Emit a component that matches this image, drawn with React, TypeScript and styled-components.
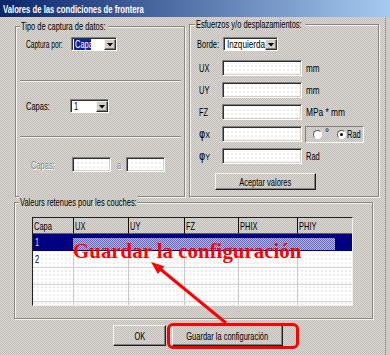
import React from "react";
import styled, { createGlobalStyle } from "styled-components";

const dither = `repeating-conic-gradient(#dbd7d2 0 25%, #c1bdb8 0 50%) 0 0 / 2px 2px`;
const fieldDots = `radial-gradient(circle at 1px 1px, #dadada 0.6px, transparent 0.8px) 0 0 / 4px 4px, #ffffff`;

const GlobalStyle = createGlobalStyle`
  html, body { margin: 0; padding: 0; width: 390px; height: 355px; overflow: hidden; background: ${dither}; }
  * { box-sizing: border-box; }
  body { font-family: "Liberation Sans", Arial, sans-serif; font-size: 11px; color: #000; }
`;

const Window = styled.div`
  position: relative;
  width: 390px;
  height: 355px;
  display: flex;
  flex-direction: column;
  background: ${dither};
`;

const TitleBar = styled.div`
  height: 17px;
  flex: none;
  background: linear-gradient(90deg, #0a246a 0%, #a6caf0 100%);
  display: flex;
  align-items: center;
  padding-left: 3px;
  color: #fff;
  font-weight: bold;
`;

const Txt = styled.span<{ $sx?: number; $o?: string }>`
  display: inline-block;
  white-space: nowrap;
  transform: scaleX(${(p) => p.$sx ?? 0.68});
  transform-origin: ${(p) => p.$o ?? "left"} center;
`;

const Body = styled.div`
  flex: 1;
  display: flex;
  flex-direction: column;
  padding: 7px 0 0 15px;
  border-right: 1px solid #a29e99;
  margin-right: 4px;
`;

const TopRow = styled.div`
  display: flex;
  align-items: flex-start;
  gap: 4px;
`;

const Group = styled.div<{ $w: number; $h: number; $mt?: number; $ml?: number }>`
  width: ${(p) => p.$w}px;
  height: ${(p) => p.$h}px;
  flex: none;
  margin: ${(p) => p.$mt ?? 0}px 0 0 ${(p) => p.$ml ?? 0}px;
  border: 1px solid #8a8682;
  box-shadow: 1px 1px 0 #f4f2f0, inset 1px 1px 0 #f4f2f0;
  display: flex;
  flex-direction: column;
`;

const Legend = styled.div<{ $ml: number; $w: number }>`
  align-self: flex-start;
  width: ${(p) => p.$w}px;
  height: 12px;
  line-height: 12px;
  margin: -7px 0 0 ${(p) => p.$ml}px;
  padding-left: 1px;
  background: ${dither};
  flex: none;
`;

const Section = styled.div<{ $h?: number; $pt: number; $pl: number }>`
  ${(p) => (p.$h ? `height: ${p.$h}px; flex: none;` : "flex: 1;")}
  padding: ${(p) => p.$pt}px 0 0 ${(p) => p.$pl}px;
  display: flex;
  flex-direction: column;
`;

const Separator = styled.div`
  height: 2px;
  flex: none;
  margin: 0 3px 0 4px;
  border-top: 1px solid #8a8682;
  border-bottom: 1px solid #f4f2f0;
`;

const Row = styled.div<{ $h: number; $mt?: number }>`
  display: flex;
  align-items: center;
  height: ${(p) => p.$h}px;
  margin-top: ${(p) => p.$mt ?? 0}px;
  flex: none;
`;

const Label = styled.div<{ $w: number; $pl?: number; $disabled?: boolean }>`
  width: ${(p) => p.$w}px;
  flex: none;
  padding-left: ${(p) => p.$pl ?? 0}px;
  line-height: 12px;
  color: ${(p) => (p.$disabled ? "#8a8682" : "#000")};
  text-shadow: ${(p) => (p.$disabled ? "1px 1px 0 #ffffff" : "none")};
`;

const Select = styled.div<{ $w: number }>`
  width: ${(p) => p.$w}px;
  height: 14px;
  flex: none;
  display: flex;
  align-items: center;
  justify-content: space-between;
  border: 1px solid;
  border-color: #808080 #ffffff #ffffff #808080;
  box-shadow: inset 1px 1px 0 #303030;
  background: #fff;
  padding: 1px 0 0 2px;
`;

const SelValue = styled.div<{ $sel?: boolean; $w: number }>`
  width: ${(p) => p.$w}px;
  height: 11px;
  line-height: 11px;
  padding-left: 1px;
  background: ${(p) => (p.$sel ? "#10249a" : "transparent")};
  color: ${(p) => (p.$sel ? "#fff" : "#000")};
  overflow: visible;
`;

const DropBtn = styled.div`
  width: 12px;
  height: 11px;
  flex: none;
  background: #d4d0c8;
  border: 1px solid;
  border-color: #f4f2f0 #303030 #303030 #f4f2f0;
  box-shadow: inset -1px -1px 0 #808080;
  display: flex;
  align-items: center;
  justify-content: center;
  &::after {
    content: "";
    width: 7px;
    height: 4px;
    background: #000;
    clip-path: polygon(0 0, 100% 0, 50% 100%);
  }
`;

const Field = styled.div<{ $w: number; $h: number }>`
  width: ${(p) => p.$w}px;
  height: ${(p) => p.$h}px;
  flex: none;
  border: 1px solid;
  border-color: #808080 #ffffff #ffffff #808080;
  box-shadow: inset 1px 1px 0 #303030, inset -1px -1px 0 #d4d0c8;
  background: ${fieldDots};
`;

const Between = styled.div`
  width: 15px;
  flex: none;
  padding-left: 6px;
  color: #8a8682;
  text-shadow: 1px 1px 0 #fff;
`;

const Unit = styled.div`
  margin-left: 4px;
  line-height: 12px;
`;

const Phi = styled.span`
  font-family: "DejaVu Sans", sans-serif;
  font-size: 12px;
`;

const Sub = styled.span`
  font-size: 9px;
`;

const RadioBox = styled.div`
  width: 59px;
  height: 17px;
  margin-left: 3px;
  flex: none;
  display: flex;
  align-items: center;
  padding-left: 7px;
  border: 1px solid;
  border-color: #808080 #ffffff #ffffff #808080;
`;

const Radio = styled.div<{ $on?: boolean; $ml?: number }>`
  width: 9px;
  height: 9px;
  flex: none;
  margin-left: ${(p) => p.$ml ?? 0}px;
  border-radius: 50%;
  border: 1px solid;
  border-color: #606060 #ffffff #ffffff #606060;
  background: #fff;
  display: flex;
  align-items: center;
  justify-content: center;
  &::after {
    content: "";
    width: 3px;
    height: 3px;
    border-radius: 50%;
    background: ${(p) => (p.$on ? "#000" : "transparent")};
  }
`;

const Degree = styled.div`
  width: 5px;
  margin-left: 3px;
  flex: none;
  font-size: 10px;
  line-height: 10px;
  margin-top: -3px;
`;

const RadLabel = styled.div`
  margin-left: 1px;
`;

const WinButton = styled.div<{ $w: number; $h: number; $mt?: number; $ml?: number }>`
  width: ${(p) => p.$w}px;
  height: ${(p) => p.$h}px;
  flex: none;
  margin: ${(p) => p.$mt ?? 0}px 0 0 ${(p) => p.$ml ?? 0}px;
  border: 1px solid;
  border-color: #f4f2f0 #202020 #202020 #f4f2f0;
  box-shadow: inset -1px -1px 0 #808080;
  display: flex;
  align-items: center;
  justify-content: center;
  line-height: 12px;
`;

const Table = styled.div`
  margin: 9px 0 0 17px;
  width: 321px;
  height: 89px;
  flex: none;
  border: 1px solid;
  border-color: #202020 #f0f0f0 #f0f0f0 #202020;
  overflow: hidden;
  display: grid;
  grid-template-columns: 41px 55px 56px 54px 59px 54px;
  grid-template-rows: 16px;
  grid-auto-rows: 17px;
  background: ${fieldDots};
`;

const HeadCell = styled.div<{ $last?: boolean }>`
  background: ${dither};
  border-right: ${(p) => (p.$last ? "none" : "1px solid #101010")};
  border-bottom: 1px solid #606060;
  padding-left: 1px;
  display: flex;
  align-items: center;
  line-height: 12px;
`;

const Cell = styled.div<{ $sel?: boolean; $last?: boolean }>`
  background: ${(p) => (p.$sel ? "#000080" : "transparent")};
  color: ${(p) => (p.$sel ? "#dcdcff" : "#000")};
  border-right: ${(p) => (p.$last ? "none" : `1px solid ${p.$sel ? "#000080" : "#c8c8c8"}`)};
  border-bottom: 1px solid ${(p) => (p.$sel ? "#000080" : "#d4d4d4")};
  padding-left: 2px;
  display: flex;
  align-items: center;
  line-height: 12px;
`;

const ButtonRow = styled.div`
  display: flex;
  gap: 6px;
  margin: 6px 0 0 98px;
`;

const Highlight = styled.div`
  position: absolute;
  left: 73px;
  top: 238px;
  width: 262px;
  height: 12px;
  background: repeating-conic-gradient(#6464c0 0 25%, #b8b8ea 0 50%) 0 0 / 2px 2px;
`;

const RedText = styled.div`
  position: absolute;
  left: 73px;
  top: 240px;
  font-family: "Liberation Serif", "Times New Roman", serif;
  font-weight: bold;
  font-size: 22px;
  line-height: 22px;
  color: #ff0000;
  white-space: nowrap;
  transform: scaleX(0.95);
  transform-origin: left center;
`;

const RedFrame = styled.div`
  position: absolute;
  left: 167px;
  top: 323px;
  width: 132px;
  height: 26px;
  border: 3px solid #ff0000;
  border-radius: 6px;
`;

const ArrowLayer = styled.svg`
  position: absolute;
  left: 0;
  top: 0;
  pointer-events: none;
`;

const cols = ["Capa", "UX", "UY", "FZ", "PHIX", "PHIY"];
const rows = ["1", "2", "", "", ""];

export default function App() {
  return (
    <>
      <GlobalStyle />
      <Window>
        <TitleBar>
          <Txt $sx={0.7}>Valores de las condiciones de frontera</Txt>
        </TitleBar>
        <Body>
          <TopRow>
            <Group $w={170} $h={171} $mt={2}>
              <Legend $ml={4} $w={88}>
                <Txt>Tipo de captura de datos:</Txt>
              </Legend>
              <Section $h={48} $pt={5} $pl={10}>
                <Row $h={14}>
                  <Label $w={45}>
                    <Txt $sx={0.6}>Captura por:</Txt>
                  </Label>
                  <Select $w={46}>
                    <SelValue $sel $w={17}>
                      <Txt>Capa</Txt>
                    </SelValue>
                    <DropBtn />
                  </Select>
                </Row>
              </Section>
              <Separator />
              <Section $h={54} $pt={17} $pl={10}>
                <Row $h={14}>
                  <Label $w={44}>
                    <Txt>Capas:</Txt>
                  </Label>
                  <Select $w={39}>
                    <SelValue $w={10}>
                      <Txt>1</Txt>
                    </SelValue>
                    <DropBtn />
                  </Select>
                </Row>
              </Section>
              <Separator />
              <Section $pt={19} $pl={15}>
                <Row $h={15}>
                  <Label $w={41} $disabled>
                    <Txt>Capas:</Txt>
                  </Label>
                  <Field $w={39} $h={15} />
                  <Between>
                    <Txt>a</Txt>
                  </Between>
                  <Field $w={39} $h={15} />
                </Row>
              </Section>
            </Group>
            <Group $w={190} $h={173}>
              <Legend $ml={5} $w={110}>
                <Txt>Esfuerzos y/o desplazamientos:</Txt>
              </Legend>
              <Section $pt={7} $pl={7}>
                <Row $h={14}>
                  <Label $w={26}>
                    <Txt>Borde:</Txt>
                  </Label>
                  <Select $w={55}>
                    <SelValue $w={38}>
                      <Txt $sx={0.74}>Inzquierda</Txt>
                    </SelValue>
                    <DropBtn />
                  </Select>
                </Row>
                <Row $h={16} $mt={9}>
                  <Label $w={25} $pl={2}>
                    <Txt>UX</Txt>
                  </Label>
                  <Field $w={80} $h={16} />
                  <Unit>
                    <Txt $sx={0.74}>mm</Txt>
                  </Unit>
                </Row>
                <Row $h={16} $mt={6}>
                  <Label $w={25} $pl={2}>
                    <Txt>UY</Txt>
                  </Label>
                  <Field $w={80} $h={16} />
                  <Unit>
                    <Txt $sx={0.74}>mm</Txt>
                  </Unit>
                </Row>
                <Row $h={16} $mt={6}>
                  <Label $w={25} $pl={2}>
                    <Txt>FZ</Txt>
                  </Label>
                  <Field $w={80} $h={16} />
                  <Unit>
                    <Txt $sx={0.76}>MPa * mm</Txt>
                  </Unit>
                </Row>
                <Row $h={16} $mt={6}>
                  <Label $w={25} $pl={2}>
                    <Txt $sx={0.8}>
                      <Phi>φ</Phi>
                      <Sub>X</Sub>
                    </Txt>
                  </Label>
                  <Field $w={80} $h={16} />
                  <RadioBox>
                    <Radio />
                    <Degree>°</Degree>
                    <Radio $on $ml={7} />
                    <RadLabel>
                      <Txt>Rad</Txt>
                    </RadLabel>
                  </RadioBox>
                </Row>
                <Row $h={16} $mt={6}>
                  <Label $w={25} $pl={2}>
                    <Txt $sx={0.8}>
                      <Phi>φ</Phi>
                      <Sub>Y</Sub>
                    </Txt>
                  </Label>
                  <Field $w={80} $h={16} />
                  <Unit>
                    <Txt>Rad</Txt>
                  </Unit>
                </Row>
                <WinButton $w={101} $h={17} $mt={9} $ml={18}>
                  <Txt $o="center">Aceptar valores</Txt>
                </WinButton>
              </Section>
            </Group>
          </TopRow>
          <Group $w={359} $h={117} $mt={5} $ml={-1}>
            <Legend $ml={4} $w={118}>
              <Txt>Valeurs retenues pour les couches:</Txt>
            </Legend>
            <Table>
              {cols.map((c, i) => (
                <HeadCell key={c} $last={i === cols.length - 1}>
                  <Txt>{c}</Txt>
                </HeadCell>
              ))}
              {rows.map((r, ri) =>
                cols.map((c, ci) => (
                  <Cell key={`${ri}-${c}`} $sel={ri === 0} $last={ci === cols.length - 1}>
                    {ci === 0 && r ? <Txt>{r}</Txt> : null}
                  </Cell>
                ))
              )}
            </Table>
          </Group>
          <ButtonRow>
            <WinButton $w={53} $h={21}>
              <Txt $o="center">OK</Txt>
            </WinButton>
            <WinButton $w={111} $h={21}>
              <Txt $o="center">Guardar la configuración</Txt>
            </WinButton>
          </ButtonRow>
        </Body>
        <Highlight />
        <RedText>Guardar la configuración</RedText>
        <RedFrame />
        <ArrowLayer width={390} height={355} viewBox="0 0 390 355">
          <line x1={226} y1={323} x2={159} y2={268} stroke="#ff0000" strokeWidth={3} />
          <polygon points="151,262 157.9,274.1 164.3,266.3" fill="#ff0000" />
        </ArrowLayer>
      </Window>
    </>
  );
}
